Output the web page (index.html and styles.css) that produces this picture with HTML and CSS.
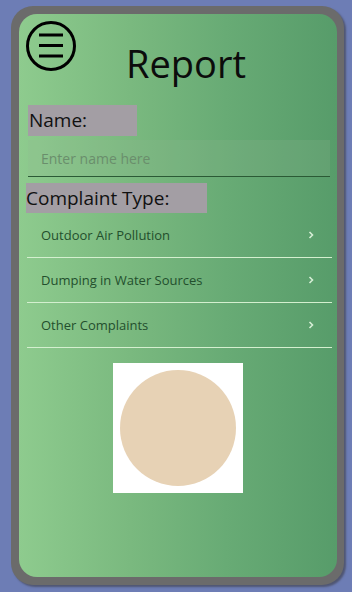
FILE: index.html
```html
<!DOCTYPE html>
<html>
<head>
<meta charset="utf-8">
<link rel="stylesheet" href="styles.css">
</head>
<body>
<div class="frame">
  <div class="card">
    <div class="header">
      <svg class="menu" width="50" height="50" viewBox="0 0 50 50">
        <circle cx="25" cy="25" r="23.5" fill="none" stroke="#000" stroke-width="3"/>
        <line x1="13" y1="14" x2="37" y2="14" stroke="#000" stroke-width="3"/>
        <line x1="13" y1="24.5" x2="37" y2="24.5" stroke="#000" stroke-width="3"/>
        <line x1="13" y1="35" x2="37" y2="35" stroke="#000" stroke-width="3"/>
      </svg>
      <h1 class="title">Report</h1>
    </div>
    <div class="label label-name">Name:</div>
    <input class="name-input" type="text" placeholder="Enter name here">
    <div class="label label-type">Complaint Type:</div>
    <ul class="list">
      <li class="item"><span>Outdoor Air Pollution</span>
        <svg class="chev" width="6" height="8" viewBox="0 0 6 8"><polyline points="1.5,1 4.5,4 1.5,7" fill="none" stroke="#d6eed6" stroke-width="1.6"/></svg></li>
      <li class="item"><span>Dumping in Water Sources</span>
        <svg class="chev" width="6" height="8" viewBox="0 0 6 8"><polyline points="1.5,1 4.5,4 1.5,7" fill="none" stroke="#d6eed6" stroke-width="1.6"/></svg></li>
      <li class="item"><span>Other Complaints</span>
        <svg class="chev" width="6" height="8" viewBox="0 0 6 8"><polyline points="1.5,1 4.5,4 1.5,7" fill="none" stroke="#d6eed6" stroke-width="1.6"/></svg></li>
    </ul>
    <div class="photo"><div class="circle"></div></div>
  </div>
</div>
</body>
</html>
```
FILE: styles.css
```css
html, body {
  margin: 0;
  padding: 0;
}
body {
  background: #6d7db5;
  width: 352px;
  height: 592px;
  overflow: hidden;
  font-family: "Open Sans", "Noto Sans", sans-serif;
}
.frame {
  margin: 6px 0 0 11px;
  width: 333px;
  height: 579px;
  box-sizing: border-box;
  padding: 8px 7px 8px 8px;
  background: #6b6b6b;
  border-radius: 22px;
  box-shadow: 2px 2px 2px rgba(60, 60, 70, 0.6);
}
.card {
  height: 100%;
  border-radius: 18px;
  background: linear-gradient(90deg, #8ecb8e 0%, #7ab97f 35%, #68ab75 65%, #579c6a 100%);
  box-sizing: border-box;
  padding: 0 0 0 7px;
  display: flex;
  flex-direction: column;
  align-items: flex-start;
}
.header {
  display: flex;
  align-items: flex-start;
}
.menu {
  margin-top: 7px;
  display: block;
}
.title {
  margin: 26px 0 0 50px;
  font-size: 38px;
  line-height: 46px;
  font-weight: 400;
  color: #0c0c0c;
}
.label {
  background: #a39ea4;
  color: #111;
  font-size: 19px;
  line-height: 31px;
  height: 31px;
  box-sizing: border-box;
}
.label-name {
  margin: 19px 0 0 2px;
  width: 109px;
  padding-left: 1px;
}
.name-input {
  margin: 4px 0 0 2px;
  width: 302px;
  height: 37px;
  box-sizing: border-box;
  border: none;
  border-bottom: 1px solid #2b5a35;
  background: rgba(150, 185, 150, 0.18);
  padding: 0 0 0 13px;
  font-family: "Open Sans", "Noto Sans", sans-serif;
  font-size: 14px;
  color: #333;
  outline: none;
}
.name-input::placeholder {
  color: #6a8e6c;
}
.label-type {
  margin: 6px 0 0 0;
  width: 181px;
  height: 30px;
  line-height: 30px;
  padding-left: 0;
}
.list {
  list-style: none;
  margin: 0 0 0 1px;
  padding: 0;
  width: 305px;
}
.item {
  height: 45px;
  box-sizing: border-box;
  border-bottom: 1px solid #d4efcf;
  display: flex;
  align-items: center;
  justify-content: space-between;
  padding: 0 18px 0 14px;
  font-size: 13px;
  color: #234f2d;
}
.chev {
  display: block;
}
.photo {
  margin: 15px 0 0 87px;
  width: 130px;
  height: 130px;
  background: #fff;
  display: flex;
  align-items: center;
  justify-content: center;
}
.circle {
  width: 116px;
  height: 116px;
  border-radius: 50%;
  background: #e7d2b5;
}
```
